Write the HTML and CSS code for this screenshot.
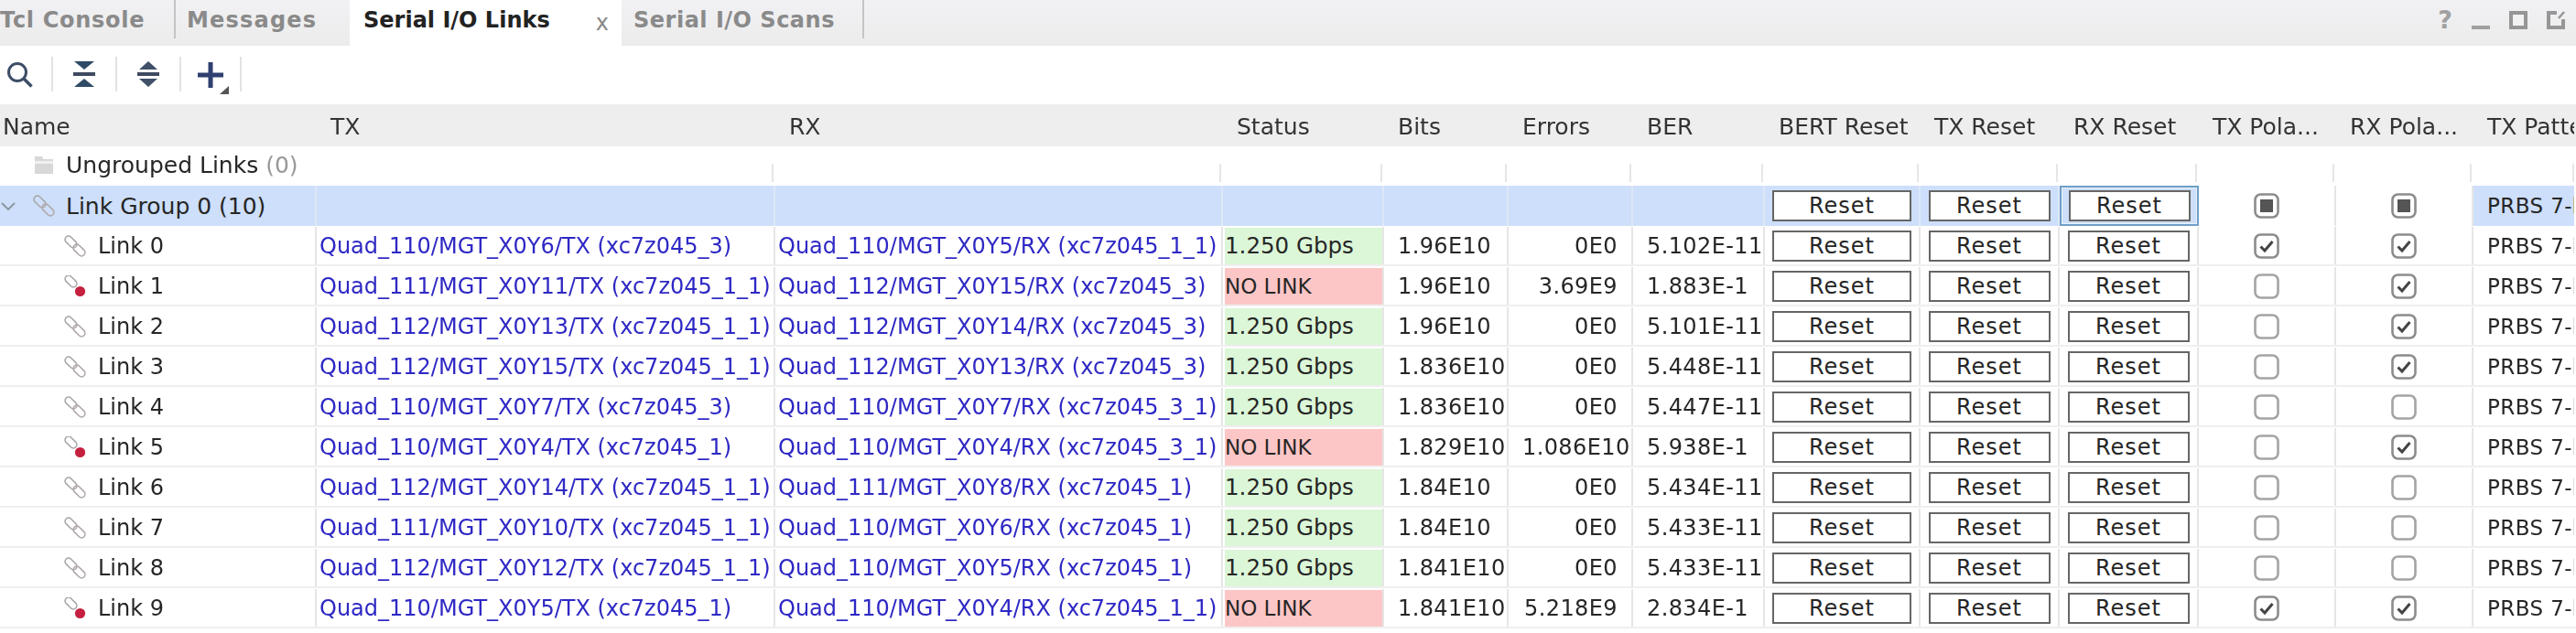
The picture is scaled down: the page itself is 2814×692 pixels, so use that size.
FILE: index.html
```html
<!DOCTYPE html>
<html lang="en">
<head>
<meta charset="utf-8">
<title>Serial I/O Links</title>
<link rel="stylesheet" href="styles.css">
</head>
<body>
<svg class="defs" width="0" height="0" aria-hidden="true">
  <defs>
    <symbol id="link" viewBox="0 0 24 24">
      <rect x="0" y="3.700" width="15" height="7.600" rx="3.800" transform="rotate(45 7.500 7.500)" fill="none" stroke="#a8a8a8" stroke-width="1.600"/>
      <rect x="9" y="12.700" width="15" height="7.600" rx="3.800" transform="rotate(45 16.500 16.500)" fill="none" stroke="#b0a8a8" stroke-width="1.600"/>
    </symbol>
    <symbol id="linkbad" viewBox="0 0 24 24">
      <rect x="0" y="2.700" width="15" height="7.600" rx="3.800" transform="rotate(45 7.500 6.500)" fill="none" stroke="#a8a8a8" stroke-width="1.600"/>
      <circle cx="17.500" cy="17.500" r="5.600" fill="#c5203f"/>
    </symbol>
    <symbol id="check" viewBox="0 0 28 28">
      <rect x="1.500" y="1.500" width="25" height="25" rx="6" fill="#fff" stroke="#8c8c8c" stroke-width="2.600"/>
      <path d="M7.500 14.500l4.500 4.500 8.500-10" fill="none" stroke="#444" stroke-width="3"/>
    </symbol>
    <symbol id="uncheck" viewBox="0 0 28 28">
      <rect x="1.500" y="1.500" width="25" height="25" rx="6" fill="#fff" stroke="#a4a4a4" stroke-width="2.600"/>
    </symbol>
    <symbol id="mixed" viewBox="0 0 28 28">
      <rect x="1.500" y="1.500" width="25" height="25" rx="6" fill="#fff" stroke="#8c8c8c" stroke-width="2.600"/>
      <rect x="7" y="7" width="14" height="14" fill="#555"/>
    </symbol>
  </defs>
</svg>

<div class="app">
  <div class="tabs">
    <div class="tab tab-first">Tcl Console</div>
    <div class="tab tab-msg">Messages</div>
    <div class="tab tab-active">Serial I/O Links<span class="close">x</span></div>
    <div class="tab tab-scan">Serial I/O Scans</div>
    <div class="win">
      <span class="help">?</span>
      <svg width="20" height="20" viewBox="0 0 20 20"><rect x="0" y="16" width="20" height="4" fill="#a0a0a0"/></svg>
      <svg width="20" height="20" viewBox="0 0 20 20"><rect x="2" y="2" width="16" height="16" fill="#f2f2f2" stroke="#969696" stroke-width="4"/></svg>
      <svg width="20" height="20" viewBox="0 0 20 20"><path d="M11 2H2v16h16V9" fill="none" stroke="#969696" stroke-width="4"/><path d="M13 8l6-7" stroke="#969696" stroke-width="2.500"/></svg>
    </div>
  </div>

  <div class="toolbar">
    <div class="tool tool-a">
      <svg width="30" height="30" viewBox="0 0 30 30"><circle cx="13" cy="13" r="9.500" fill="none" stroke="#3d4d66" stroke-width="3"/><path d="M20 20l8.500 8.500" stroke="#3d4d66" stroke-width="3.500"/></svg>
    </div>
    <div class="tool tool-b">
      <svg width="26" height="30" viewBox="0 0 26 30"><path d="M2 1h22L13 10zM13 20l11 9H2z" fill="#2f4a66"/><rect x="1" y="13" width="24" height="4" fill="#3f4a60"/></svg>
    </div>
    <div class="tool tool-b">
      <svg width="26" height="30" viewBox="0 0 26 30"><path d="M13 1l10 9H3zM3 20h20L13 29z" fill="#3f5068"/><rect x="1" y="13" width="24" height="4" fill="#3f4a60"/></svg>
    </div>
    <div class="tool tool-c">
      <svg width="36" height="44" viewBox="0 0 36 44"><path d="M0 23h28M14 9v28" stroke="#2f3f70" stroke-width="5"/><path d="M34 35v9H24z" fill="#555"/></svg>
    </div>
  </div>

  <div class="row head">
    <div class="c">Name</div><div class="c">TX</div><div class="c">RX</div><div class="c">Status</div><div class="c">Bits</div><div class="c">Errors</div><div class="c">BER</div><div class="c">BERT Reset</div><div class="c">TX Reset</div><div class="c">RX Reset</div><div class="c">TX Pola...</div><div class="c">RX Pola...</div><div class="c">TX Pattern</div>
  </div>

  <div class="row ungrouped">
    <div class="c name lvl1">
      <svg class="ic" width="24" height="24" viewBox="0 0 24 24"><path d="M2 3h8l1 3h11v16H2z" fill="#d8d8d8"/><path d="M2 8h20v3H2z" fill="#f0f0f0"/></svg>
      <span>Ungrouped Links <span class="count">(0)</span></span>
    </div>
    <div class="c"></div><div class="c"></div><div class="c"></div><div class="c"></div><div class="c"></div><div class="c"></div><div class="c"></div><div class="c"></div><div class="c"></div><div class="c"></div><div class="c"></div><div class="c"></div>
  </div>

  <div class="row group">
    <div class="c name">
      <svg class="chev" width="18" height="18" viewBox="0 0 18 18"><path d="M2 6l7 7 7-7" fill="none" stroke="#8c94a0" stroke-width="1.800"/></svg>
      <svg class="ic" width="24" height="24"><use href="#link"/></svg>
      <span>Link Group 0 (10)</span>
    </div>
    <div class="c"></div><div class="c"></div><div class="c"></div><div class="c"></div><div class="c"></div><div class="c"></div>
    <div class="c btn-c"><span class="btn btn-wide">Reset</span></div>
    <div class="c btn-c"><span class="btn">Reset</span></div>
    <div class="c btn-c focus"><span class="btn">Reset</span></div>
    <div class="c box"><svg width="28" height="28"><use href="#mixed"/></svg></div>
    <div class="c box"><svg width="28" height="28"><use href="#mixed"/></svg></div>
    <div class="c txt">PRBS 7-bit</div>
  </div>

  <div id="rows"></div>
</div>
<script src="rows.js"></script>
</body>
</html>
```

FILE: rows.js
```js
var links = [
  ["Quad_110/MGT_X0Y6/TX (xc7z045_3)","Quad_110/MGT_X0Y5/RX (xc7z045_1_1)",1,"1.96E10","0E0","5.102E-11",1,1],
  ["Quad_111/MGT_X0Y11/TX (xc7z045_1_1)","Quad_112/MGT_X0Y15/RX (xc7z045_3)",0,"1.96E10","3.69E9","1.883E-1",0,1],
  ["Quad_112/MGT_X0Y13/TX (xc7z045_1_1)","Quad_112/MGT_X0Y14/RX (xc7z045_3)",1,"1.96E10","0E0","5.101E-11",0,1],
  ["Quad_112/MGT_X0Y15/TX (xc7z045_1_1)","Quad_112/MGT_X0Y13/RX (xc7z045_3)",1,"1.836E10","0E0","5.448E-11",0,1],
  ["Quad_110/MGT_X0Y7/TX (xc7z045_3)","Quad_110/MGT_X0Y7/RX (xc7z045_3_1)",1,"1.836E10","0E0","5.447E-11",0,0],
  ["Quad_110/MGT_X0Y4/TX (xc7z045_1)","Quad_110/MGT_X0Y4/RX (xc7z045_3_1)",0,"1.829E10","1.086E10","5.938E-1",0,1],
  ["Quad_112/MGT_X0Y14/TX (xc7z045_1_1)","Quad_111/MGT_X0Y8/RX (xc7z045_1)",1,"1.84E10","0E0","5.434E-11",0,0],
  ["Quad_111/MGT_X0Y10/TX (xc7z045_1_1)","Quad_110/MGT_X0Y6/RX (xc7z045_1)",1,"1.84E10","0E0","5.433E-11",0,0],
  ["Quad_112/MGT_X0Y12/TX (xc7z045_1_1)","Quad_110/MGT_X0Y5/RX (xc7z045_1)",1,"1.841E10","0E0","5.433E-11",0,0],
  ["Quad_110/MGT_X0Y5/TX (xc7z045_1)","Quad_110/MGT_X0Y4/RX (xc7z045_1_1)",0,"1.841E10","5.218E9","2.834E-1",1,1]
];
var html = "";
links.forEach(function (l, i) {
  var up = l[2];
  html += '<div class="row link">' +
    '<div class="c name lvl2"><svg class="ic" width="24" height="24"><use href="#' + (up ? 'link' : 'linkbad') + '"/></svg><span>Link ' + i + '</span></div>' +
    '<div class="c port">' + l[0] + '</div>' +
    '<div class="c port">' + l[1] + '</div>' +
    '<div class="c status"><span class="' + (up ? 'ok' : 'bad') + '">' + (up ? '1.250 Gbps' : 'NO LINK') + '</span></div>' +
    '<div class="c num">' + l[3] + '</div>' +
    '<div class="c err">' + l[4] + '</div>' +
    '<div class="c num">' + l[5] + '</div>' +
    '<div class="c btn-c"><span class="btn btn-wide">Reset</span></div>' +
    '<div class="c btn-c"><span class="btn">Reset</span></div>' +
    '<div class="c btn-c"><span class="btn">Reset</span></div>' +
    '<div class="c box"><svg width="28" height="28"><use href="#' + (l[6] ? 'check' : 'uncheck') + '"/></svg></div>' +
    '<div class="c box"><svg width="28" height="28"><use href="#' + (l[7] ? 'check' : 'uncheck') + '"/></svg></div>' +
    '<div class="c txt">PRBS 7-bit</div>' +
    '</div>';
});
document.getElementById("rows").innerHTML = html;
```

FILE: styles.css
```css
* { box-sizing: border-box; }
html, body { margin: 0; padding: 0; background: #fff; }
body { width: 2814px; height: 692px; overflow: hidden; font-family: "DejaVu Sans", sans-serif; font-size: 24px; color: #262626; }
.defs { position: absolute; }
.app { filter: blur(0.6px); }

.tabs { display: flex; height: 50px; background: linear-gradient(#f1f1f4, #ececec); align-items: stretch; }
.tab { font-weight: bold; color: #8a8a8a; line-height: 44px; white-space: nowrap; }
.tab-first { width: 195px; margin-left: -3px; padding-left: 3px; height: 42px; border-right: 2px solid #c4c4c4; letter-spacing: 0.7px; }
.tab-msg { width: 190px; padding-left: 12px; letter-spacing: 1.2px; }
.tab-active { width: 297px; padding-left: 15px; background: #fff; color: #222; position: relative; }
.close { position: absolute; right: 14px; top: 3px; font-weight: normal; color: #888; }
.tab-scan { width: 265px; padding-left: 13px; height: 42px; border-right: 2px solid #c4c4c4; letter-spacing: 0.5px; }
.win { margin-left: auto; display: flex; align-items: flex-start; gap: 21px; padding: 12px 12px 0 0; }
.help { color: #a0a0a0; font-weight: bold; font-size: 27px; line-height: 20px; }

.toolbar { display: flex; height: 64px; align-items: center; padding: 0 0 2px 6px; }
.tool { height: 38px; border-right: 2px solid #e2e2e2; display: flex; align-items: center; }
.tool-a { width: 52px; }
.tool-b { width: 70px; padding-left: 21px; }
.tool-c { width: 66px; padding-left: 18px; }

.row { display: grid; grid-template-columns: 346px 501px 489px 176px 136px 136px 144px 170px 152px 152px 150px 150px 110px; }
.c { border-right: 2px solid #e6e6e6; display: flex; align-items: center; white-space: nowrap; overflow: hidden; min-width: 0; }
.c:last-child { border-right: 0; }

.head { height: 46px; background: #eeeeee; font-size: 25px; padding-top: 2px; }
.head .c { border-right: 0; padding-left: 15px; color: #333; }
.head .c:first-child { padding-left: 3px; }

.ungrouped { height: 43px; background: #fff; }
.ungrouped .c { border-right-color: transparent; background: linear-gradient(transparent 45%, #e6e6e6 45%, #e6e6e6 90%, transparent 90%) right / 2px 100% no-repeat; }
.ungrouped .name { background: none; font-size: 25px; padding-bottom: 3px; }
.count { color: #999; }

.group { height: 44px; }
.group .c { background: #cddffa; border-right-color: #dde7f6; }
.group .name { font-size: 25px; }
.group .c.box { background: #fff; border-right-color: #e6e6e6; }
.group .focus { border: 2px solid #6f9fc8; box-shadow: inset 0 0 0 1px #e8f1fb; }

.link { height: 44px; padding-top: 1px; border-bottom: 2px solid #efefef; }

.chev { margin-right: 18px; flex: none; }
.ic { margin-right: 12px; flex: none; }
.lvl1 { padding-left: 36px; }
.lvl2 { padding-left: 70px; }
.lvl2 .ic { margin-right: 13px; }

.port { color: #2e28c4; padding-left: 3px; }
.status { padding: 0; font-size: 23px; }
.status span { display: flex; align-items: center; width: 100%; height: 40px; margin-left: 2px; padding-left: 0; }
.status .ok { font-size: 24.500px; }
.ok { background: #dcf6d8; }
.bad { background: #fdc6c6; }
.num { padding-left: 15px; letter-spacing: 0.4px; }
.err { justify-content: safe flex-end; padding: 0 15px; letter-spacing: 0.4px; }
.txt { padding-left: 15px; font-size: 23px; letter-spacing: 0.4px; }
.btn-c { justify-content: center; }
.btn { display: flex; align-items: center; justify-content: center; width: 133px; height: 34px; border: 2px solid #666; background: #fff; letter-spacing: 1px; }
.btn-wide { width: 152px; }
.box { justify-content: center; }
```
